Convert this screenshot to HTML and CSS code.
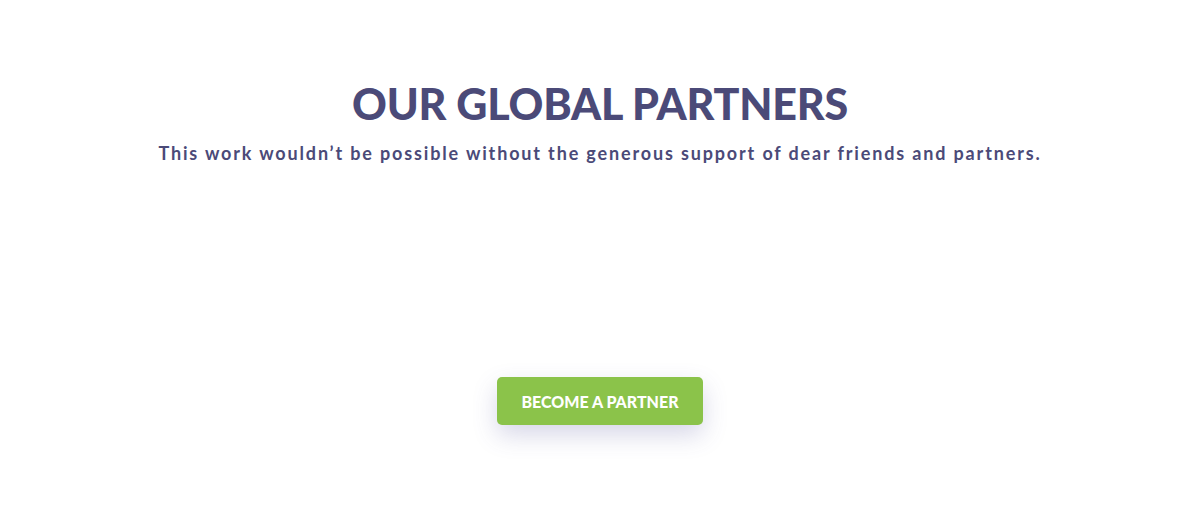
FILE: index.html
```html
<!DOCTYPE html>
<html>
<head>
<meta charset="utf-8">
<link rel="stylesheet" href="styles.css">
</head>
<body>
<section class="partners">
  <h2 class="partners-title">OUR GLOBAL PARTNERS</h2>
  <p class="partners-sub">This work wouldn’t be possible without the generous support of dear friends and partners.</p>
  <div class="partners-logos"></div>
  <a class="btn-partner" href="#">BECOME A PARTNER</a>
</section>
</body>
</html>
```
FILE: styles.css
```css
html, body {
  margin: 0;
  padding: 0;
  background: #fff;
}
.partners {
  display: flex;
  flex-direction: column;
  align-items: center;
  padding: 78px 0 80px;
  font-family: Lato, "Open Sans", sans-serif;
  color: #4b4a78;
}
.partners-title {
  margin: 0;
  font-size: 43px;
  line-height: 52px;
  font-weight: 900;
  letter-spacing: -0.2px;
}
.partners-sub {
  margin: 11px 0 0;
  font-size: 18px;
  line-height: 24px;
  font-weight: 700;
  letter-spacing: 1.85px;
}
.partners-logos {
  height: 212px;
}
.btn-partner {
  display: flex;
  align-items: center;
  justify-content: center;
  width: 206px;
  height: 48px;
  background: #8bc34a;
  color: #fff;
  border-radius: 5px;
  text-decoration: none;
  font-size: 16px;
  font-weight: 900;
  box-shadow: 0 10px 24px rgba(75, 74, 150, 0.22);
}
```
